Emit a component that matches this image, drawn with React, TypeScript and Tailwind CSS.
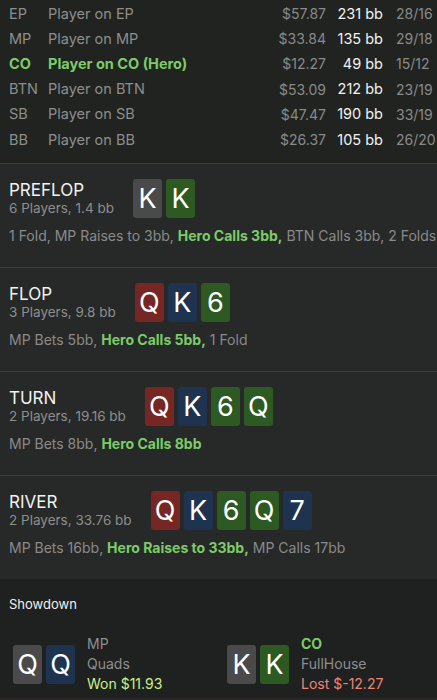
import React from "react";

type Color = "gray" | "green" | "red" | "blue";

const cardBg: Record<Color, string> = {
  gray: "bg-[#4a4a4a]",
  green: "bg-[#2c5a22]",
  red: "bg-[#762623]",
  blue: "bg-[#1d3350]",
};

function Card({ v, c }: { v: string; c: Color }) {
  return (
    <div
      className={`${cardBg[c]} w-[29px] h-[39px] rounded-[3px] flex items-center justify-center text-white text-[27px] leading-none`}
    >
      {v}
    </div>
  );
}

const players = [
  { pos: "EP", name: "Player on EP", price: "$57.87", bb: "231 bb", r: "28/16" },
  { pos: "MP", name: "Player on MP", price: "$33.84", bb: "135 bb", r: "29/18" },
  { pos: "CO", name: "Player on CO (Hero)", price: "$12.27", bb: "49 bb", r: "15/12", hero: true },
  { pos: "BTN", name: "Player on BTN", price: "$53.09", bb: "212 bb", r: "23/19" },
  { pos: "SB", name: "Player on SB", price: "$47.47", bb: "190 bb", r: "33/19" },
  { pos: "BB", name: "Player on BB", price: "$26.37", bb: "105 bb", r: "26/20" },
];

type Street = {
  title: string;
  sub: string;
  cards: [string, Color][];
  pre: string;
  hero: string;
  post: string;
};

const streets: Street[] = [
  {
    title: "PREFLOP",
    sub: "6 Players, 1.4 bb",
    cards: [
      ["K", "gray"],
      ["K", "green"],
    ],
    pre: "1 Fold, MP Raises to 3bb, ",
    hero: "Hero Calls 3bb,",
    post: " BTN Calls 3bb, 2 Folds",
  },
  {
    title: "FLOP",
    sub: "3 Players, 9.8 bb",
    cards: [
      ["Q", "red"],
      ["K", "blue"],
      ["6", "green"],
    ],
    pre: "MP Bets 5bb, ",
    hero: "Hero Calls 5bb,",
    post: " 1 Fold",
  },
  {
    title: "TURN",
    sub: "2 Players, 19.16 bb",
    cards: [
      ["Q", "red"],
      ["K", "blue"],
      ["6", "green"],
      ["Q", "green"],
    ],
    pre: "MP Bets 8bb, ",
    hero: "Hero Calls 8bb",
    post: "",
  },
  {
    title: "RIVER",
    sub: "2 Players, 33.76 bb",
    cards: [
      ["Q", "red"],
      ["K", "blue"],
      ["6", "green"],
      ["Q", "green"],
      ["7", "blue"],
    ],
    pre: "MP Bets 16bb, ",
    hero: "Hero Raises to 33bb,",
    post: " MP Calls 17bb",
  },
];

export default function App() {
  return (
    <div
      className="w-[437px] h-[700px] bg-[#2a2624] flex flex-col overflow-hidden"
      style={{ fontFamily: 'Inter, "Liberation Sans", Arial, sans-serif' }}
    >
      <div className="bg-[#202320] pl-[9px] pt-[1px] h-[163px] shrink-0">
        {players.map((p) => (
          <div key={p.pos} className="flex items-center h-[25.2px] text-[14.5px]">
            <div
              className={`w-[39px] ${p.hero ? "text-[#7ccb68] font-bold" : "text-[#8e8e8e]"}`}
            >
              {p.pos}
            </div>
            <div
              className={`flex-1 ${p.hero ? "text-[#7ccb68] font-bold" : "text-[#8e8e8e]"}`}
            >
              {p.name}
            </div>
            <div className="text-[#8a8a8a] text-right text-[14px]">{p.price}</div>
            <div className="w-[57px] text-right text-[#f2f2f2] text-[14.5px]">{p.bb}</div>
            <div className="w-[54px] pl-[13px] text-[#8a8a8a] whitespace-nowrap text-[14px]">{p.r}</div>
          </div>
        ))}
      </div>
      {streets.map((s) => (
        <div
          key={s.title}
          className="bg-[#262927] border-t border-[#3b3e3b] pt-[15px] pb-[22px] pl-[9px] shrink-0"
        >
          <div className="flex items-center h-[39px]">
            <div className="flex flex-col">
              <div className="text-[17px] leading-[19px] text-[#f2f2f2]">{s.title}</div>
              <div className="text-[13.5px] leading-[17px] text-[#8e8e8e]">{s.sub}</div>
            </div>
            <div className="flex gap-[4px] ml-[19px]">
              {s.cards.map(([v, c], i) => (
                <Card key={i} v={v} c={c} />
              ))}
            </div>
          </div>
          <div className="mt-[9px] text-[14px] leading-[18px] text-[#8a8a8a] whitespace-nowrap">
            {s.pre}
            <span className="font-bold text-[#7ccb68]">{s.hero}</span>
            {s.post}
          </div>
        </div>
      ))}
      <div className="bg-[#1e211f] h-[119px] shrink-0 pl-[9px]">
        <div className="pt-[16px] text-[13px] leading-[18px] text-[#f0f0f0]">Showdown</div>
        <div className="flex mt-[21px]">
          <div className="w-[218px] pl-[4px] flex items-center">
            <div className="flex gap-[4px]">
              <Card v="Q" c="gray" />
              <Card v="Q" c="blue" />
            </div>
            <div className="ml-[12px] flex flex-col text-[14px] leading-[20px]">
              <span className="text-[#8e8e8e]">MP</span>
              <span className="text-[#8e8e8e]">Quads</span>
              <span className="text-[#c8f08c]">Won $11.93</span>
            </div>
          </div>
          <div className="flex items-center">
            <div className="flex gap-[4px]">
              <Card v="K" c="gray" />
              <Card v="K" c="green" />
            </div>
            <div className="ml-[12px] flex flex-col text-[14px] leading-[20px]">
              <span className="text-[#7ccb68] font-bold">CO</span>
              <span className="text-[#8e8e8e]">FullHouse</span>
              <span className="text-[#f08474]">Lost $-12.27</span>
            </div>
          </div>
        </div>
      </div>
    </div>
  );
}
